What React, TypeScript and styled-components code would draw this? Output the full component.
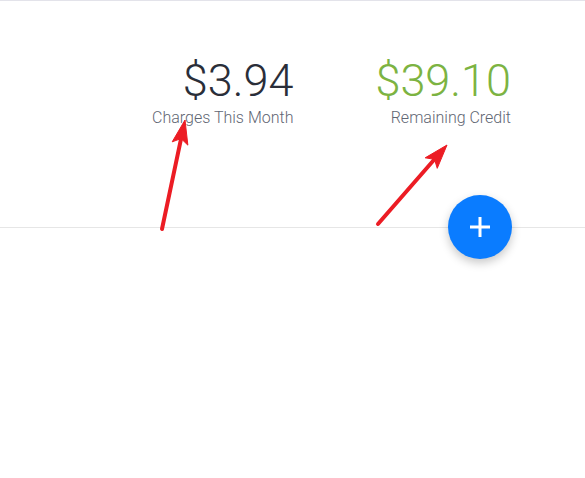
import React from "react";
import styled, { createGlobalStyle } from "styled-components";

const GlobalStyle = createGlobalStyle`
  html, body {
    margin: 0;
    padding: 0;
    background: #ffffff;
    font-family: Roboto, "Liberation Sans", Arial, sans-serif;
  }
`;

const Page = styled.div`
  position: relative;
  width: 585px;
  height: 478px;
  overflow: hidden;
  border-top: 1px solid #e3e3ea;
  box-sizing: border-box;
`;

const Summary = styled.section`
  position: relative;
  height: 227px;
  border-bottom: 1px solid #e6e6e6;
  display: flex;
  justify-content: flex-end;
  align-items: flex-start;
  gap: 82px;
  padding: 53px 74px 0 0;
  box-sizing: border-box;
`;

const Stat = styled.div`
  display: flex;
  flex-direction: column;
  align-items: flex-end;
`;

const Amount = styled.div<{ $color: string }>`
  font-size: 45px;
  font-weight: 300;
  line-height: 54px;
  color: ${(p) => p.$color};
`;

const Label = styled.div`
  font-size: 16px;
  font-weight: 300;
  line-height: 20px;
  color: #5f6673;
`;

const Fab = styled.button`
  position: absolute;
  right: 73px;
  bottom: -32px;
  width: 64px;
  height: 64px;
  border: none;
  border-radius: 50%;
  background: #0a7cff;
  box-shadow: 0 4px 10px rgba(0, 0, 0, 0.22);
  display: flex;
  align-items: center;
  justify-content: center;
  padding: 0;
  cursor: pointer;
`;

const Overlay = styled.svg`
  position: absolute;
  left: 0;
  top: 0;
  pointer-events: none;
`;

interface ArrowProps {
  x1: number;
  y1: number;
  x2: number;
  y2: number;
}

// annotation arrow: line with a filled head at (x2, y2)
const Arrow: React.FC<ArrowProps> = ({ x1, y1, x2, y2 }) => {
  const dx = x2 - x1;
  const dy = y2 - y1;
  const len = Math.hypot(dx, dy);
  const ux = dx / len;
  const uy = dy / len;
  const headLen = 24;
  const headHalf = 8;
  const bx = x2 - ux * headLen;
  const by = y2 - uy * headLen;
  const pts = [
    `${x2},${y2}`,
    `${bx - uy * headHalf},${by + ux * headHalf}`,
    `${bx + ux * 5},${by + uy * 5}`,
    `${bx + uy * headHalf},${by - ux * headHalf}`,
  ].join(" ");
  return (
    <g fill="#ec1c24" stroke="#ec1c24">
      <line
        x1={x1}
        y1={y1}
        x2={bx + ux * 6}
        y2={by + uy * 6}
        strokeWidth={4}
        strokeLinecap="round"
      />
      <polygon points={pts} strokeWidth={1} strokeLinejoin="round" />
    </g>
  );
};

export default function App() {
  return (
    <>
      <GlobalStyle />
      <Page>
        <Summary>
          <Stat>
            <Amount $color="#2a2e39">$3.94</Amount>
            <Label>Charges This Month</Label>
          </Stat>
          <Stat>
            <Amount $color="#7cb342">$39.10</Amount>
            <Label>Remaining Credit</Label>
          </Stat>
          <Fab aria-label="Add">
            <svg width="22" height="22" viewBox="0 0 22 22">
              <path
                d="M11 1v20M1 11h20"
                stroke="#ffffff"
                strokeWidth="3"
                fill="none"
              />
            </svg>
          </Fab>
        </Summary>
        <Overlay width="585" height="478">
          <Arrow x1={162} y1={228} x2={185} y2={119} />
          <Arrow x1={378} y1={223} x2={447} y2={144} />
        </Overlay>
      </Page>
    </>
  );
}
